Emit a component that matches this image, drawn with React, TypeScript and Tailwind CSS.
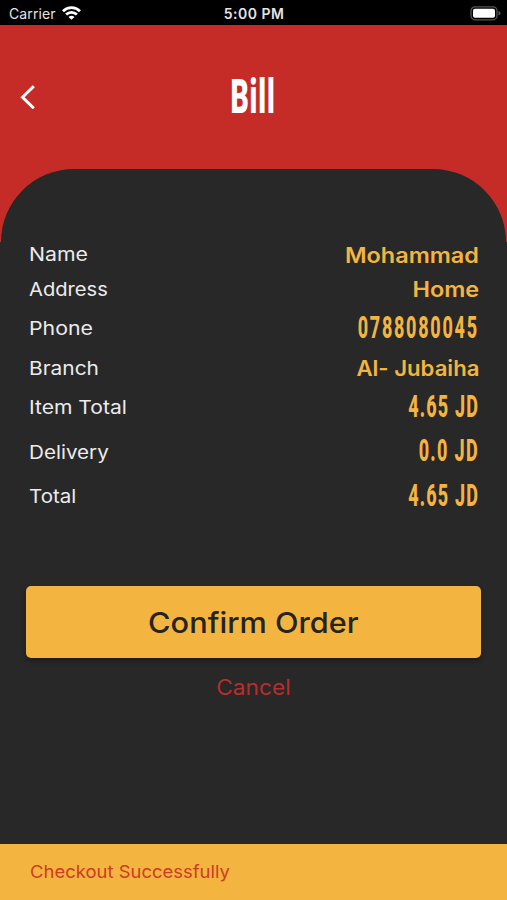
import { clsx } from 'clsx';

const rows = [
  { label: 'Name', value: 'Mohammad', height: 'h-[34.5px]', labelClass: 'scale-x-[1.148]', valueClass: 'scale-x-[1.09]' },
  { label: 'Address', value: 'Home', height: 'h-[34.5px]', labelClass: 'scale-x-[1.09]', valueClass: 'scale-x-[1.09]' },
  { label: 'Phone', value: '0788080045', height: 'h-[44px]', labelClass: 'scale-x-[1.15]', valueClass: 'tracking-[3px]', numeric: true },
  { label: 'Branch', value: 'Al- Jubaiha', height: 'h-[35px]', labelClass: 'scale-x-[1.13]', valueClass: 'scale-x-[1.03]' },
  { label: 'Item Total', value: '4.65 JD', height: 'h-[44px]', labelClass: 'scale-x-[1.14]', valueClass: 'tracking-[2px]', numeric: true },
  { label: 'Delivery', value: '0.0 JD', height: 'h-[45px]', labelClass: 'scale-x-[1.115]', valueClass: 'tracking-[2.3px]', numeric: true },
  { label: 'Total', value: '4.65 JD', height: 'h-[44px]', labelClass: 'scale-x-[1.11]', valueClass: 'tracking-[2px]', numeric: true },
];

function StatusBar() {
  return (
    <div className="grid h-[25px] grid-cols-3 items-center bg-black pl-[9px] pr-[6px] text-[14px] text-[#e4e4e4]">
      <div className="flex items-center gap-[6px] pt-[2px]">
        <span className="tracking-[0.1px]">Carrier</span>
        <svg className="-mt-[2px]" width="19" height="14" viewBox="0 0 19 14" fill="none" stroke="#fff" strokeWidth="2.8">
          <path d="M1 5.2C5.8.5 13.2.5 18 5.2" />
          <path d="M4.1 8.6C7.2 5.7 11.8 5.7 14.9 8.6" />
          <path d="M9.5 13.7L6.5 10.9Q9.5 8.6 12.5 10.9Z" fill="#fff" stroke="none" />
        </svg>
      </div>
      <span className="-ml-[2px] pt-[2px] text-center font-semibold tracking-[0.5px]">5:00 PM</span>
      <svg className="mt-[2px] ml-auto" width="31" height="15" viewBox="0 0 31 15">
        <rect x="1" y=".8" width="26" height="13" rx="4" fill="none" stroke="#555" strokeWidth="1.3" />
        <rect x="3" y="2.8" width="22" height="9" rx="2" fill="#fff" />
        <path d="M28.5 5Q30.5 5.5 30.5 7.3Q30.5 9.1 28.5 9.6Z" fill="#555" />
      </svg>
    </div>
  );
}

export default function App() {
  return (
    <div className="flex h-[900px] w-[507px] flex-col overflow-hidden bg-[#282828] font-['Inter',sans-serif]">
      <StatusBar />

      {/* Header, with the rounded sheet rising into it */}
      <div className="h-[217px] shrink-0 bg-[#c52c28]">
        <header className="grid h-[144px] grid-cols-3 items-center pl-[20px] pr-[20px]">
          <button aria-label="Back" className="w-fit">
            <svg width="16" height="24" viewBox="0 0 16 24" fill="none" stroke="#fff" strokeWidth="3">
              <path d="M13.8 1.2L2.5 12.2L13.8 23.2" />
            </svg>
          </button>
          <h1 className="flex justify-center pb-[2px]">
            <span className="scale-x-[0.58] font-['Roboto',sans-serif] text-[49px] leading-none font-black tracking-[1.5px] text-white">
              Bill
            </span>
          </h1>
        </header>
        <div className="mx-px h-[73px] rounded-t-[76px] bg-[#282828]" />
      </div>

      {/* Order summary */}
      <dl className="-mt-[5px] shrink-0 pl-[29px] pr-[28px]">
        {rows.map((row) => (
          <div key={row.label} className={clsx('flex items-center justify-between', row.height)}>
            <dt className={clsx('origin-left pt-[2px] text-[18.5px] text-[#ececec]', row.labelClass)}>{row.label}</dt>
            <dd
              className={clsx(
                'origin-right whitespace-nowrap text-[#f3b53f]',
                row.numeric
                  ? "scale-x-[0.58] pb-[2px] font-['Roboto',sans-serif] text-[31px] leading-none font-extrabold"
                  : 'pt-px text-[21.5px] font-semibold',
                row.valueClass,
              )}
            >
              {row.value}
            </dd>
          </div>
        ))}
      </dl>

      {/* Actions */}
      <div className="mt-[68px] flex shrink-0 flex-col items-center px-[26px]">
        <button className="flex h-[72px] w-full items-center justify-center rounded-[5px] bg-[#f3b53f] shadow-[0_3px_5px_rgba(0,0,0,0.35)]">
          <span className="scale-x-[1.06] pt-px text-[29px] font-medium text-[#25241f]">Confirm Order</span>
        </button>
        <button className="mt-[14px] h-[32px]">
          <span className="inline-block scale-x-[1.08] text-[21px] text-[#b82d2d]">Cancel</span>
        </button>
      </div>

      <div className="mt-auto flex h-[56px] shrink-0 items-center bg-[#f3b53f] pl-[30px]">
        <span className="origin-left scale-x-[1.055] pt-px text-[17.5px] text-[#ce3b25]">Checkout Successfully</span>
      </div>
    </div>
  );
}
